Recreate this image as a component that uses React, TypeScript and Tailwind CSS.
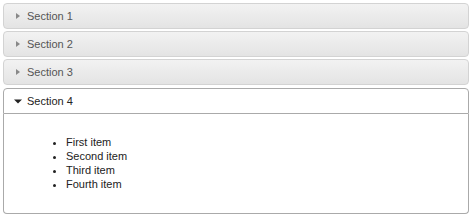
import React from "react";

const Right = () => (
  <svg width="16" height="16" viewBox="0 0 16 16" className="shrink-0">
    <path d="M6 5 L10 8 L6 11 Z" fill="#888" />
  </svg>
);
const Down = () => (
  <svg width="16" height="16" viewBox="0 0 16 16" className="shrink-0">
    <path d="M4 6.5 L12 6.5 L8 10.5 Z" fill="#222" />
  </svg>
);

export default function App() {
  const font = { fontFamily: '"Liberation Sans", Arial, sans-serif' };
  return (
    <div className="w-[474px] h-[217px] bg-white pl-[3px] pr-[5px] pt-[3px] flex flex-col" style={font}>
      {["Section 1", "Section 2", "Section 3"].map((s) => (
        <div
          key={s}
          className="mb-[2px] h-[26px] shrink-0 flex items-center pl-[6px] rounded-[4px] border border-[#d3d3d3] bg-gradient-to-b from-[#f2f2f2] to-[#e4e4e4] text-[11px] text-[#555]"
        >
          <Right />
          <span className="ml-[1px]">{s}</span>
        </div>
      ))}
      <div className="mt-[1px] h-[26px] shrink-0 flex items-center pl-[6px] rounded-t-[4px] border border-[#aaa] bg-white text-[11px] text-[#222]">
        <Down />
        <span className="ml-[1px]">Section 4</span>
      </div>
      <div className="h-[100px] shrink-0 rounded-b-[4px] border border-t-0 border-[#aaa] bg-white text-[11px] text-[#222] pt-[21px]">
        <ul className="list-disc pl-[62px] leading-[14px]">
          <li>First item</li>
          <li>Second item</li>
          <li>Third item</li>
          <li>Fourth item</li>
        </ul>
      </div>
    </div>
  );
}
